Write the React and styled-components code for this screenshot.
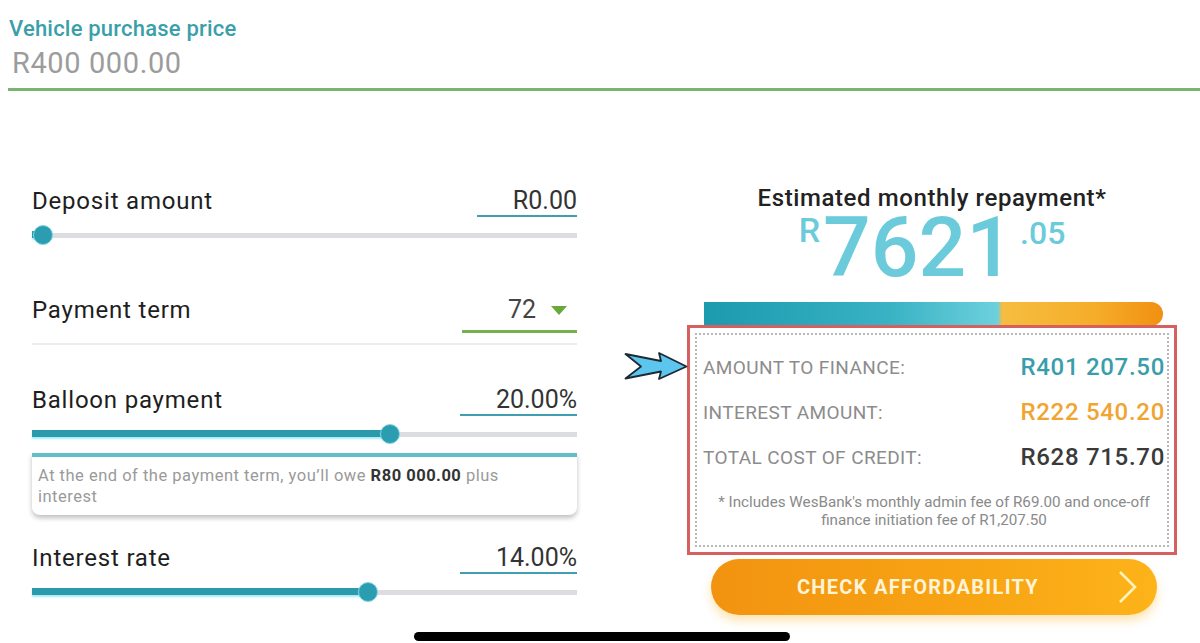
import React from 'react';
import styled, { createGlobalStyle } from 'styled-components';

const GlobalStyle = createGlobalStyle`
  html, body {
    margin: 0;
    padding: 0;
    background: #fff;
    font-family: Roboto, "Liberation Sans", sans-serif;
  }
`;

const fields = [
  { label: 'Deposit amount', value: 'R0.00', slider: 2, width: 100 },
  { label: 'Payment term', value: '72', select: true },
  { label: 'Balloon payment', value: '20.00%', slider: 65.7, note: true, width: 117 },
  { label: 'Interest rate', value: '14.00%', slider: 61.7, width: 117 },
];

const summary = [
  { label: 'AMOUNT TO FINANCE:', value: 'R401 207.50', color: '#3a9eaa' },
  { label: 'INTEREST AMOUNT:', value: 'R222 540.20', color: '#f0a533' },
  { label: 'TOTAL COST OF CREDIT:', value: 'R628 715.70', color: '#3a3a3a' },
];

const Slider = ({ pct }) => (
  <SliderWrap>
    <Rail />
    <Fill style={{ width: `${pct}%` }} />
    <Thumb style={{ left: `calc(${pct}% - 10px)` }} />
  </SliderWrap>
);

const App = () => {
  return (
    <Page>
      <GlobalStyle />
      <Header>
        <HeaderLabel>Vehicle purchase price</HeaderLabel>
        <HeaderValue>R400 000.00</HeaderValue>
      </Header>
      <GreenLine />

      <Main>
        <LeftCol>
          {fields.map((f) => (
            <Field key={f.label} $gap={f.select ? 40 : f.note ? 28 : 50}>
              <Row>
                <Label>{f.label}</Label>
                {f.select ? (
                  <SelectValue>
                    72
                    <Caret viewBox="0 0 16 9">
                      <polygon points="0,0 16,0 8,9" fill="#6aa83a" />
                    </Caret>
                  </SelectValue>
                ) : (
                  <Value $width={f.width}>{f.value}</Value>
                )}
              </Row>
              {f.slider !== undefined && <Slider pct={f.slider} />}
              {f.select && <Divider />}
              {f.note && (
                <Note>
                  At the end of the payment term, you’ll owe <b>R80 000.00</b> plus interest
                </Note>
              )}
            </Field>
          ))}
        </LeftCol>

        <RightCol>
          <Title>Estimated monthly repayment*</Title>
          <Amount>
            <Sup>R</Sup>
            <Big>7621</Big>
            <Sup $cents>.05</Sup>
          </Amount>
          <ProgressBar />
          <SummaryBox>
            <Pointer viewBox="0 0 64 30">
              <path
                d="M1.5 3 L37 10 L35 2 L62.5 15.5 L35 28 L37 20.5 L1.5 27.5 L17 15.5 Z"
                fill="#5cc6ee"
                stroke="#1d2a33"
                strokeWidth="1.8"
                strokeLinejoin="round"
              />
            </Pointer>
            <Dotted>
              {summary.map((s) => (
                <SummaryRow key={s.label}>
                  <SummaryLabel>{s.label}</SummaryLabel>
                  <SummaryValue $color={s.color}>{s.value}</SummaryValue>
                </SummaryRow>
              ))}
              <Footnote>
                * Includes WesBank's monthly admin fee of R69.00 and once-off finance initiation fee of R1,207.50
              </Footnote>
            </Dotted>
          </SummaryBox>
          <CheckButton>
            CHECK AFFORDABILITY
            <Chevron viewBox="0 0 20 34">
              <polyline points="2,2 17,17 2,32" fill="none" stroke="#fff3b8" strokeWidth="2.6" />
            </Chevron>
          </CheckButton>
        </RightCol>
      </Main>

      <HomeBar />
    </Page>
  );
};

const Page = styled.div`
  position: relative;
  width: 1200px;
  height: 643px;
  overflow: hidden;
  background: #fff;
`;

const Header = styled.div`
  padding: 16px 0 0 9px;
`;

const HeaderLabel = styled.div`
  font-size: 22px;
  line-height: 26px;
  font-weight: 500;
  color: #3b9fa9;
  letter-spacing: 0.2px;
`;

const HeaderValue = styled.div`
  margin-top: 4px;
  padding-left: 3px;
  font-size: 29px;
  line-height: 34px;
  color: #9c9c9c;
  letter-spacing: 0.6px;
`;

const GreenLine = styled.div`
  margin: 8px 0 0 8px;
  height: 3px;
  background: #78b572;
`;

const Main = styled.div`
  display: grid;
  grid-template-columns: 545px 490px;
  column-gap: 110px;
  padding-left: 32px;
`;

const LeftCol = styled.div`
  display: flex;
  flex-direction: column;
  padding-top: 95px;
`;

const Field = styled.div`
  display: flex;
  flex-direction: column;
  margin-bottom: ${(p) => p.$gap}px;
`;

const Row = styled.div`
  display: flex;
  justify-content: space-between;
  align-items: flex-start;
`;

const Label = styled.div`
  font-size: 24px;
  line-height: 30px;
  color: #1e1e1e;
  letter-spacing: 0.8px;
`;

const Value = styled.div`
  min-width: ${(p) => p.$width}px;
  text-align: right;
  font-size: 25px;
  line-height: 29px;
  color: #333;
  border-bottom: 2px solid #3f9fae;
`;

const SelectValue = styled.div`
  display: flex;
  align-items: center;
  justify-content: flex-end;
  gap: 15px;
  width: 115px;
  padding-right: 10px;
  box-sizing: border-box;
  font-size: 25px;
  line-height: 30px;
  padding-bottom: 5px;
  color: #444;
  border-bottom: 3px solid #77b04e;
`;

const Caret = styled.svg`
  width: 16px;
  height: 9px;
`;

const Divider = styled.div`
  margin-top: 10px;
  height: 2px;
  background: #ececec;
`;

const SliderWrap = styled.div`
  position: relative;
  height: 20px;
  margin-top: 8px;
  display: flex;
  align-items: center;
`;

const Rail = styled.div`
  flex: 1;
  height: 5px;
  background: #dcdde1;
`;

const Fill = styled.div`
  position: absolute;
  left: 0;
  top: 6px;
  height: 7px;
  background: #2a9aac;
  box-shadow: 0 2px 2px rgba(90, 220, 240, 0.55);
`;

const Thumb = styled.div`
  position: absolute;
  top: 0;
  width: 20px;
  height: 20px;
  border-radius: 50%;
  box-sizing: border-box;
  background: #2b9db1;
  border: 1px solid #84d6e4;
`;

const Note = styled.div`
  margin-top: 9px;
  border-top: 4px solid #5ebfcb;
  border-radius: 0 0 8px 8px;
  box-shadow: 0 3px 5px rgba(0, 0, 0, 0.25);
  padding: 8px 60px 8px 6px;
  font-size: 16.5px;
  line-height: 21px;
  color: #9a9a9a;
  letter-spacing: 0.5px;

  b {
    color: #333;
    font-weight: 700;
  }
`;

const RightCol = styled.div`
  display: flex;
  flex-direction: column;
  padding-top: 92px;
`;

const Title = styled.div`
  text-align: center;
  font-size: 24px;
  line-height: 30px;
  font-weight: 500;
  color: #222;
  letter-spacing: 0.6px;
`;

const Amount = styled.div`
  display: flex;
  justify-content: center;
  align-items: flex-start;
  color: #6ccbdb;
  font-weight: 500;
`;

const Big = styled.span`
  font-size: 84px;
  line-height: 70px;
  letter-spacing: 0px;
`;

const Sup = styled.span`
  font-size: ${(p) => (p.$cents ? '32px' : '34px')};
  line-height: 34px;
  margin-top: ${(p) => (p.$cents ? '3px' : '0')};
  margin-right: ${(p) => (p.$cents ? '0' : '3px')};
  margin-left: ${(p) => (p.$cents ? '6px' : '0')};
`;

const ProgressBar = styled.div`
  margin: 19px 14px 0 17px;
  height: 24px;
  border-radius: 0 12px 12px 0;
  background: linear-gradient(
    90deg,
    #1c9aae 0%,
    #38b2c4 40%,
    #6dd0dc 64%,
    #f6bd40 65%,
    #f5ad2a 85%,
    #f19010 100%
  );
`;

const SummaryBox = styled.div`
  position: relative;
  margin-top: -1px;
  border: 3px solid #d65f60;
  padding: 5px;
`;

const Pointer = styled.svg`
  position: absolute;
  left: -66px;
  top: 23px;
  width: 64px;
  height: 30px;
`;

const Dotted = styled.div`
  border: 2px dotted #b8b8b8;
  padding: 17px 2px 16px 6px;
  display: flex;
  flex-direction: column;
  gap: 15px;
`;

const SummaryRow = styled.div`
  display: flex;
  justify-content: space-between;
  align-items: center;
  height: 30px;
`;

const SummaryLabel = styled.span`
  font-size: 19px;
  color: #8c8c8c;
  letter-spacing: 0.4px;
`;

const SummaryValue = styled.span`
  font-size: 24px;
  font-weight: 500;
  color: ${(p) => p.$color};
  letter-spacing: 0.7px;
`;

const Footnote = styled.div`
  margin-top: 6px;
  padding: 0 4px;
  text-align: center;
  font-size: 15.2px;
  line-height: 18px;
  color: #8a8a8a;
`;

const CheckButton = styled.div`
  position: relative;
  margin: 4px 20px 0 24px;
  height: 56px;
  border-radius: 28px;
  background: linear-gradient(90deg, #f29310 0%, #f8a514 60%, #fdb31a 100%);
  box-shadow: 0 6px 10px rgba(250, 180, 40, 0.35);
  display: flex;
  align-items: center;
  justify-content: center;
  padding-right: 32px;
  font-size: 20px;
  font-weight: 700;
  letter-spacing: 1.3px;
  color: #fff4d8;
`;

const Chevron = styled.svg`
  position: absolute;
  right: 19px;
  top: 11px;
  width: 20px;
  height: 34px;
`;

const HomeBar = styled.div`
  position: absolute;
  left: 414px;
  top: 632px;
  width: 376px;
  height: 9px;
  border-radius: 5px;
  background: #000;
`;

export default App;
